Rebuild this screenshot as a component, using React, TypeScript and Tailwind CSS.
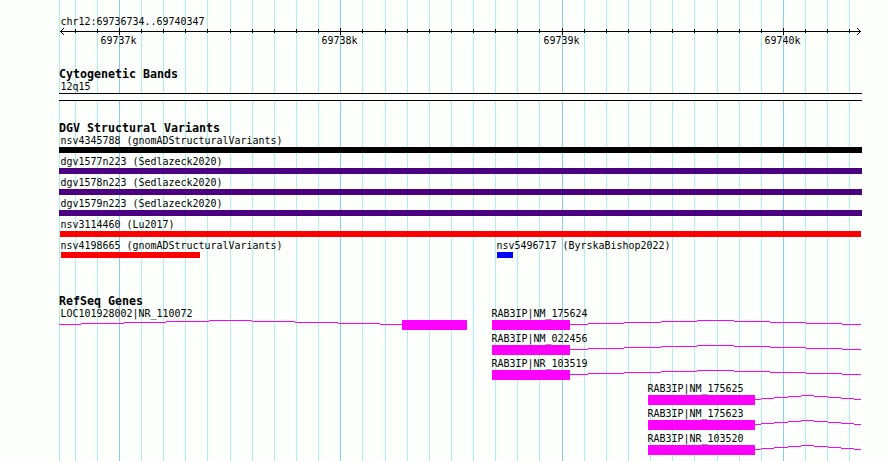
import type { ReactNode } from "react";
import clsx from "clsx";

const GRID = [
  59, 75, 97, 119, 141, 163, 185, 207, 230, 252, 274, 296, 318, 340, 362, 385,
  407, 429, 451, 473, 495, 517, 539, 562, 584, 606, 628, 650, 672, 694, 717,
  739, 761, 783, 805, 827, 849,
];
const MAJOR = [119, 340, 562, 783];

const ticks = [
  { label: "69737k", spacing: "ml-[41px]" },
  { label: "69738k", spacing: "ml-[185px]" },
  { label: "69739k", spacing: "ml-[186px]" },
  { label: "69740k", spacing: "ml-[185px]" },
];

const variants = [
  { name: "nsv4345788 (gnomADStructuralVariants)", bar: "w-[803px] bg-black" },
  { name: "dgv1577n223 (Sedlazeck2020)", bar: "w-[803px] bg-[#4b0082]" },
  { name: "dgv1578n223 (Sedlazeck2020)", bar: "w-[803px] bg-[#4b0082]" },
  { name: "dgv1579n223 (Sedlazeck2020)", bar: "w-[803px] bg-[#4b0082]" },
  { name: "nsv3114460 (Lu2017)", bar: "ml-px w-[801px] bg-[#ff0000]" },
];

const longIntron =
  "M0 4.5H18M18 3.5H54M54 2.5H91M91 1.5H127M127 .5H164M164 1.5H200M200 2.5H236M236 3.5H272M272 4.5H291";
const shortIntron =
  "M0 4.5H6M6 3.5H19M19 2.5H33M33 1.5H46M46 .5H59M59 1.5H73M73 2.5H86M86 3.5H99M99 4.5H106";
const locIntron =
  "M0 4.5H22M22 3.5H65M65 2.5H107M107 1.5H150M150 .5H193M193 1.5H236M236 2.5H279M279 3.5H321M321 4.5H343";

const Label = ({
  children,
  className,
}: {
  children: ReactNode;
  className?: string;
}) => (
  <div
    className={clsx(
      "h-[13px] origin-top translate-x-[0.4px] scale-y-[1.12] whitespace-pre text-[9.97px] leading-[12px]",
      className
    )}
  >
    {children}
  </div>
);

const Heading = ({ children }: { children: ReactNode }) => (
  <h2 className="h-3 whitespace-pre text-[11.63px] font-bold leading-3">
    {children}
  </h2>
);

const Intron = ({ d, width }: { d: string; width: number }) => (
  <svg
    width={width}
    height="10"
    className="block shrink-0"
    shapeRendering="crispEdges"
  >
    <path d={d} stroke="#ff00ff" fill="none" />
  </svg>
);

const Gene = ({ name, short }: { name: string; short?: boolean }) => (
  <div className={clsx("h-[25px]", short ? "ml-[589px]" : "ml-[433px]")}>
    <Label className="-ml-px">{name}</Label>
    <div className="flex">
      <div
        className={clsx(
          "h-2.5 shrink-0 bg-[#ff00ff]",
          short ? "w-[107px]" : "w-[78px]"
        )}
      />
      <Intron
        d={short ? shortIntron : longIntron}
        width={short ? 106 : 291}
      />
    </div>
  </div>
);

const Gridlines = () => (
  <svg
    width="890"
    height="461"
    className="absolute inset-0"
    shapeRendering="crispEdges"
  >
    {GRID.map((x) => (
      <rect
        key={x}
        x={x}
        y="0"
        width="1"
        height="461"
        fill={MAJOR.includes(x) ? "#87ceeb" : "#afeeee"}
      />
    ))}
  </svg>
);

const Axis = () => (
  <svg
    width="803"
    height="6"
    viewBox="59 28 803 6"
    className="block overflow-visible"
    shapeRendering="crispEdges"
  >
    <rect x="60" y="31" width="801" height="1" />
    {GRID.slice(1).map((x) => (
      <rect
        key={x}
        x={x}
        y={MAJOR.includes(x) ? 28 : 29}
        width="1"
        height={MAJOR.includes(x) ? 7 : 4}
      />
    ))}
    <path
      d="M61 30h1v1h-1zM62 29h1v1h-1zM63 28h1v1h-1zM61 32h1v1h-1zM62 33h1v1h-1zM63 34h1v1h-1zM859 30h1v1h-1zM858 29h1v1h-1zM857 28h1v1h-1zM859 32h1v1h-1zM858 33h1v1h-1zM857 34h1v1h-1z"
    />
  </svg>
);

export default function App() {
  return (
    <main className="relative h-[461px] w-[890px] overflow-hidden bg-[#fcfffc] font-['DejaVu_Sans_Mono',monospace] text-black">
      <Gridlines />
      <div className="relative ml-[59px] w-[803px] pt-[15px]">
        <header className="h-[53px]">
          <Label className="ml-px">chr12:69736734..69740347</Label>
          <Axis />
          <div className="flex">
            {ticks.map((tick) => (
              <Label
                key={tick.label}
                className={clsx("w-9 shrink-0", tick.spacing)}
              >
                {tick.label}
              </Label>
            ))}
          </div>
        </header>

        <section className="h-[54px]">
          <Heading>Cytogenetic Bands</Heading>
          <Label className="ml-px">12q15</Label>
          <div className="h-2 border-y border-black bg-[#fcfffc]" />
        </section>

        <section className="h-[173px]">
          <Heading>DGV Structural Variants</Heading>
          {variants.map((variant) => (
            <div key={variant.name} className="h-[21px]">
              <Label className="ml-px">{variant.name}</Label>
              <div className={clsx("h-1.5", variant.bar)} />
            </div>
          ))}
          <div className="flex">
            <div className="ml-px w-[436px]">
              <Label>nsv4198665 (gnomADStructuralVariants)</Label>
              <div className="ml-px h-1.5 w-[139px] bg-[#ff0000]" />
            </div>
            <div>
              <Label>nsv5496717 (ByrskaBishop2022)</Label>
              <div className="ml-px h-1.5 w-4 bg-[#0000ff]" />
            </div>
          </div>
        </section>

        <section>
          <Heading>RefSeq Genes</Heading>
          <div className="flex h-[25px]">
            <div className="w-0 shrink-0">
              <Label className="ml-px">LOC101928002|NR_110072</Label>
              <div className="flex w-[408px]">
                <Intron d={locIntron} width={343} />
                <div className="h-2.5 w-[65px] bg-[#ff00ff]" />
              </div>
            </div>
            <Gene name="RAB3IP|NM_175624" />
          </div>
          <Gene name="RAB3IP|NM_022456" />
          <Gene name="RAB3IP|NR_103519" />
          <Gene name="RAB3IP|NM_175625" short />
          <Gene name="RAB3IP|NM_175623" short />
          <Gene name="RAB3IP|NR_103520" short />
        </section>
      </div>
    </main>
  );
}
